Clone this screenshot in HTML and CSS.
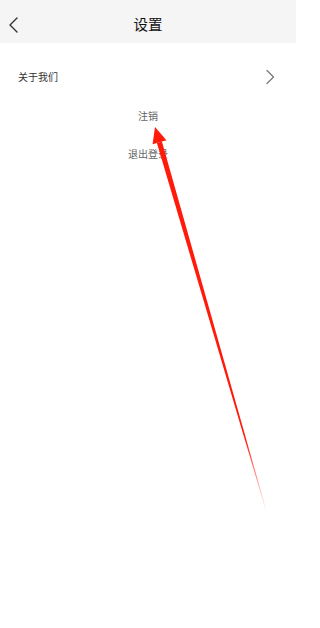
FILE: index.html
```html
<!DOCTYPE html>
<html lang="zh-CN">
<head>
<meta charset="utf-8">
<title>设置</title>
<link rel="stylesheet" href="styles.css">
</head>
<body>
<div class="page">
  <header class="navbar">
    <span class="back">
      <svg width="12" height="18" viewBox="0 0 12 18"><path d="M9 2 L2 9 L9 16" fill="none" stroke="#333" stroke-width="1.4" stroke-linecap="round" stroke-linejoin="round"/></svg>
    </span>
    <h1 class="title">设置</h1>
    <span class="spacer"></span>
  </header>
  <div class="row">
    <span class="row-label">关于我们</span>
    <svg class="row-arrow" width="10" height="16" viewBox="0 0 10 16"><path d="M2 1.5 L8.5 8 L2 14.5" fill="none" stroke="#777" stroke-width="1.2" stroke-linecap="round" stroke-linejoin="round"/></svg>
  </div>
  <div class="actions">
    <div class="action">注销</div>
    <div class="action">退出登录</div>
  </div>
  <svg class="annotation" width="296" height="628" viewBox="0 0 296 628">
    <defs>
      <linearGradient id="fade" gradientUnits="userSpaceOnUse" x1="159" y1="142" x2="266" y2="510">
        <stop offset="0" stop-color="#ff1a0a" stop-opacity="1"/>
        <stop offset="0.8" stop-color="#ff1a0a" stop-opacity="1"/>
        <stop offset="1" stop-color="#ff1a0a" stop-opacity="0.05"/>
      </linearGradient>
    </defs>
    <polygon points="161.9,141.6 156.9,143.1 265.7,510.2 266.3,510" fill="url(#fade)"/>
    <polygon points="155,127 166.4,140.2 152.6,144.2" fill="#ff1a0a"/>
  </svg>
</div>
</body>
</html>
```
FILE: styles.css
```css
* { box-sizing: border-box; }
html, body {
  margin: 0;
  padding: 0;
  background: #fff;
}
body {
  font-family: "Noto Sans CJK SC", "Noto Sans", sans-serif;
}
.page {
  position: relative;
  width: 296px;
  height: 628px;
  overflow: hidden;
  background: #fff;
}
.navbar {
  height: 43px;
  background: #f5f5f5;
  display: flex;
  align-items: center;
  padding: 0 8px;
}
.back {
  width: 40px;
  display: flex;
  align-items: center;
  padding-top: 6px;
}
.back svg { display: block; }
.title {
  flex: 1;
  margin: 0;
  text-align: center;
  font-size: 14.5px;
  font-weight: normal;
  color: #111;
  line-height: 20px;
  padding-top: 5px;
}
.spacer { width: 40px; }
.row {
  margin-top: 12px;
  height: 44px;
  display: flex;
  align-items: center;
  justify-content: space-between;
  padding: 0 21px 0 18px;
}
.row-label {
  font-size: 10px;
  color: #333;
  line-height: 14px;
}
.row-arrow { display: block; }
.actions {
  margin-top: 5px;
  display: flex;
  flex-direction: column;
  align-items: center;
  gap: 14px;
}
.action {
  height: 24px;
  line-height: 24px;
  font-size: 10px;
  color: #666;
}
.annotation {
  position: absolute;
  left: 0;
  top: 0;
  pointer-events: none;
}
```
